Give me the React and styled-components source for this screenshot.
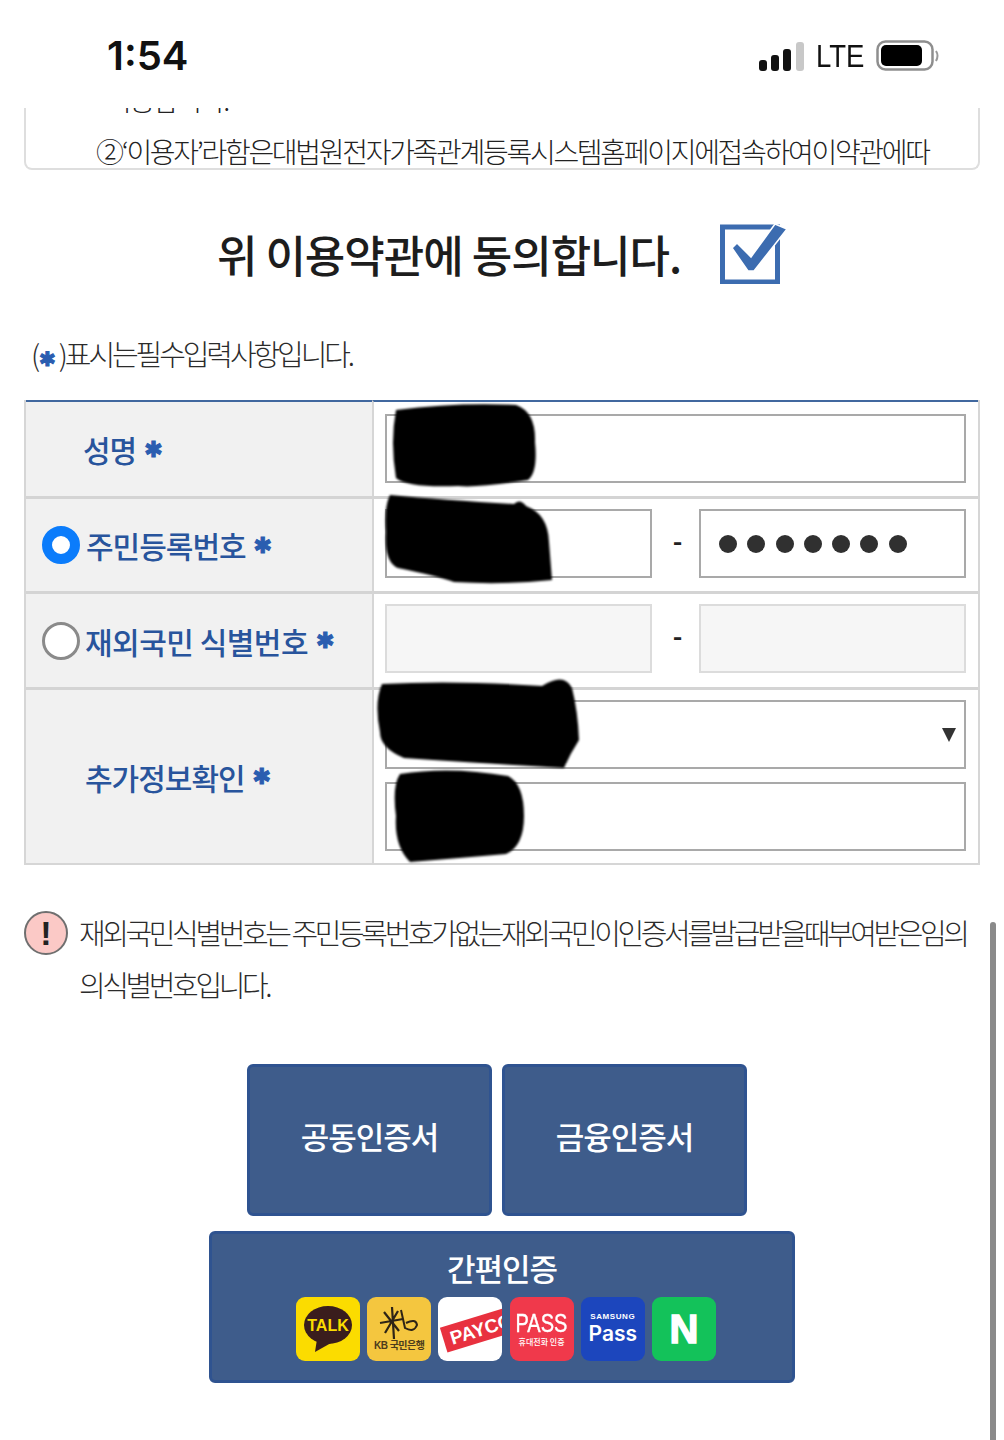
import styled, { createGlobalStyle } from 'styled-components';

const GlobalStyle = createGlobalStyle`
  html, body {
    margin: 0;
    padding: 0;
    background: #fff;
  }
  * {
    box-sizing: border-box;
  }
`;

const KR = `'Noto Sans CJK KR', 'Noto Sans', sans-serif`;

const Page = styled.div`
  position: relative;
  width: 1004px;
  height: 1440px;
  overflow: hidden;
  background: #fff;
  font-family: ${KR};
  color: #2b2b2b;
`;

const StatusBar = styled.div`
  height: 108px;
  display: flex;
  align-items: flex-start;
  justify-content: space-between;
  padding: 30px 64px 0 107px;
`;

const Time = styled.div`
  font-family: Inter, sans-serif;
  font-size: 40px;
  line-height: 52px;
  font-weight: 600;
  color: #111;
`;

const StatusIcons = styled.div`
  display: flex;
  align-items: center;
  gap: 11px;
  height: 52px;
`;

const Lte = styled.span`
  font-family: 'Liberation Sans', sans-serif;
  font-size: 32px;
  line-height: 52px;
  color: #111;
  transform: scaleX(0.86);
  transform-origin: left center;
  width: 49px;
`;

const TermsBox = styled.div`
  margin: 0 24px;
  height: 62px;
  border: 2px solid #dedede;
  border-top: 0;
  border-radius: 0 0 8px 8px;
  overflow: hidden;
  display: flex;
  flex-direction: column;
  justify-content: flex-end;
  padding-left: 70px;
`;

const TermsLine = styled.div`
  flex: none;
  height: 34px;
  margin-top: 18px;
  padding-left: ${(p) => p.$indent || 0}px;
  line-height: 34px;
  font-size: 28px;
  letter-spacing: -2.3px;
  white-space: nowrap;
  font-weight: 300;
  color: #222;
`;

const AgreeRow = styled.div`
  height: 172px;
  padding: 0 0 4px 217px;
  display: flex;
  align-items: center;
`;

const AgreeText = styled.div`
  width: 503px;
  font-size: 44px;
  font-weight: 500;
  letter-spacing: -1px;
  line-height: 60px;
  color: #1d1d1d;
  white-space: nowrap;
`;

const RequiredNote = styled.div`
  height: 58px;
  padding-left: 31px;
  font-size: 29px;
  line-height: 22px;
  font-weight: 300;
  letter-spacing: -3.1px;
  color: #2b2b2b;
  white-space: nowrap;
`;

const Star = styled.span`
  font-family: 'DejaVu Sans', sans-serif;
  color: #2a5db0;
  font-size: ${(p) => p.$size || 22}px;
  letter-spacing: 0;
  font-weight: 700;
  -webkit-text-stroke: 1px #2a5db0;
  margin: ${(p) => p.$margin || '0 0 0 8px'};
`;

const FormTable = styled.div`
  margin: 0 24px;
  width: 956px;
  display: grid;
  grid-template-columns: 346px 1fr;
  border-left: 2px solid #d6d6d6;
  border-right: 2px solid #d6d6d6;
  border-bottom: 2px solid #d6d6d6;
`;

const LabelCell = styled.div`
  height: ${(p) => p.$height}px;
  background: #f1f1f1;
  border-top: ${(p) => (p.$first ? '2px solid #41689f' : '3px solid #d4d4d4')};
  display: flex;
  align-items: center;
  padding-left: ${(p) => p.$indent}px;
`;

const LabelText = styled.span`
  color: #28549c;
  font-size: 30px;
  font-weight: 500;
  letter-spacing: ${(p) => p.$spacing || 0}px;
  white-space: nowrap;
  line-height: 44px;
`;

const Radio = styled.span`
  flex: none;
  width: 38px;
  height: 38px;
  border-radius: 50%;
  margin-right: ${(p) => p.$gap}px;
  background: #fff;
  border: ${(p) => (p.$checked ? '10px solid #0b7cfb' : '3px solid #8a8a8a')};
`;

const FieldCell = styled.div`
  height: ${(p) => p.$height}px;
  border-left: 2px solid #d6d6d6;
  border-top: ${(p) => (p.$first ? '2px solid #41689f' : '3px solid #d4d4d4')};
  background: #fff;
  padding: ${(p) => (p.$first ? 12 : 10)}px 12px 0 11px;
  display: flex;
  flex-direction: column;
  gap: 13px;
`;

const FieldRow = styled.div`
  display: flex;
  align-items: center;
`;

const Input = styled.div`
  flex: none;
  width: ${(p) => (p.$half ? '267px' : 'auto')};
  height: 69px;
  border: 2px solid ${(p) => (p.$disabled ? '#dcdcdc' : '#a9a9a9')};
  background: ${(p) => (p.$disabled ? '#f6f6f6' : '#fff')};
  position: relative;
  display: flex;
  align-items: center;
`;

const Dash = styled.span`
  width: 47px;
  padding: 0 0 8px 4px;
  text-align: center;
  font-size: 26px;
  font-weight: 700;
  color: #222;
`;

const Dots = styled.div`
  display: flex;
  gap: 10.3px;
  padding-left: 18px;
`;

const Dot = styled.span`
  width: 18px;
  height: 18px;
  border-radius: 50%;
  background: #303030;
`;

const Caret = styled.span`
  position: absolute;
  right: 8px;
  top: 26px;
  width: 0;
  height: 0;
  border-left: 7px solid transparent;
  border-right: 7px solid transparent;
  border-top: 14px solid #333;
`;

const InfoBlock = styled.div`
  display: flex;
  margin: 41px 0 0 24px;
  width: 950px;
`;

const InfoIcon = styled.div`
  flex: none;
  width: 44px;
  height: 44px;
  margin: 5px 11px 0 0;
  border-radius: 50%;
  background: #fbc9c6;
  border: 2px solid #6f6f6f;
  color: #222;
  font-family: 'Liberation Sans', sans-serif;
  font-weight: 700;
  font-size: 34px;
  line-height: 40px;
  text-align: center;
`;

const InfoText = styled.div`
  font-size: 29px;
  line-height: 52px;
  font-weight: 300;
  letter-spacing: -3.4px;
  color: #2b2b2b;
  white-space: nowrap;
`;

const ButtonGroup = styled.div`
  margin-top: 54px;
  display: flex;
  flex-direction: column;
  align-items: center;
  gap: 15px;
`;

const ButtonRow = styled.div`
  display: flex;
  gap: 10px;
  margin-right: 10px;
`;

const AuthButton = styled.div`
  width: ${(p) => p.$width}px;
  height: 152px;
  background: #3e5c8b;
  border: 3px solid #2f5390;
  border-radius: 6px;
  color: #fff;
  display: flex;
  flex-direction: column;
  align-items: center;
  justify-content: ${(p) => (p.$top ? 'flex-start' : 'center')};
  font-size: 31px;
  font-weight: 500;
  letter-spacing: -1px;
  line-height: 44px;
  padding: ${(p) => (p.$top ? '12px 0 0' : '0 0 8px')};
`;

const LogoRow = styled.div`
  display: flex;
  gap: 7.2px;
  margin: 7px 0 0 8px;
`;

const Logo = styled.div`
  position: relative;
  width: 64px;
  height: 64px;
  border-radius: 9px;
  overflow: hidden;
  background: ${(p) => p.$bg};
  color: ${(p) => p.$fg || '#fff'};
  display: flex;
  flex-direction: column;
  align-items: center;
  justify-content: center;
  letter-spacing: 0;
`;

const KbCaption = styled.span`
  font-family: 'Liberation Sans', ${KR};
  font-size: 10px;
  font-weight: 700;
  line-height: 12px;
  letter-spacing: -0.5px;
  color: #4b3b1c;
  white-space: nowrap;
`;

const PaycoBand = styled.span`
  position: absolute;
  left: 4px;
  top: 19px;
  width: 76px;
  height: 26px;
  background: #e8313f;
  color: #fff;
  font-family: 'Liberation Sans', sans-serif;
  font-weight: 700;
  font-size: 19px;
  line-height: 27px;
  padding-left: 7px;
  transform: rotate(-17deg);
  white-space: nowrap;
`;

const PassTitle = styled.span`
  font-family: 'Liberation Sans', sans-serif;
  font-size: 25px;
  line-height: 26px;
  transform: scaleX(0.8);
  font-weight: 500;
  -webkit-text-stroke: 0.4px #fff;
`;

const PassSub = styled.span`
  font-size: 8px;
  line-height: 12px;
  white-space: nowrap;
`;

const SamsungLabel = styled.span`
  font-family: 'Liberation Sans', sans-serif;
  font-weight: 700;
  font-size: 8px;
  line-height: 10px;
  letter-spacing: 0.6px;
`;

const SamsungPass = styled.span`
  font-family: Inter, sans-serif;
  font-weight: 600;
  font-size: 21px;
  line-height: 24px;
`;

const NaverN = styled.span`
  font-family: 'Liberation Sans', sans-serif;
  font-weight: 700;
  font-size: 40px;
  line-height: 40px;
  -webkit-text-stroke: 1.5px #fff;
`;

const ScrollThumb = styled.div`
  position: absolute;
  left: 990px;
  top: 922px;
  width: 6px;
  height: 530px;
  border-radius: 3px;
  background: #8a8a8a;
`;

const Redaction = styled.svg`
  position: absolute;
  left: ${(p) => p.$x}px;
  top: ${(p) => p.$y}px;
  filter: blur(1px);
`;

const redactions = [
  { x: 388, y: 402, w: 150, h: 88, d: 'M8 8 Q70 0 128 3 Q148 10 147 40 Q150 70 140 78 Q90 86 70 84 Q20 86 8 76 Q2 40 8 8Z' },
  { x: 384, y: 492, w: 172, h: 94, d: 'M6 3 Q60 8 130 12 Q136 6 142 14 Q164 22 165 50 L168 88 Q120 93 70 90 Q54 84 14 76 Q0 70 2 40 Q0 15 6 3Z' },
  { x: 374, y: 672, w: 210, h: 100, d: 'M8 12 Q80 8 168 14 Q190 0 198 16 Q204 40 205 68 Q196 82 190 96 Q120 92 30 86 Q6 76 6 60 Q0 30 8 12Z' },
  { x: 390, y: 766, w: 138, h: 100, d: 'M10 8 Q60 0 118 10 Q134 18 134 50 Q134 80 116 88 Q70 92 20 96 Q4 80 6 50 Q2 20 10 8Z' },
];

const App = () => {
  return (
    <Page>
      <GlobalStyle />
      <StatusBar>
        <Time>1:54</Time>
        <StatusIcons>
          <svg width="46" height="30" viewBox="0 0 46 30">
            <rect x="0" y="19" width="8" height="11" rx="3" fill="#111" />
            <rect x="12" y="14" width="8" height="16" rx="3" fill="#111" />
            <rect x="24" y="8" width="8" height="22" rx="3" fill="#111" />
            <rect x="37" y="1" width="8" height="29" rx="3" fill="#c8c8c8" />
          </svg>
          <Lte>LTE</Lte>
          <svg width="64" height="32" viewBox="0 0 64 32">
            <rect x="1.5" y="1.5" width="55" height="28" rx="8" fill="none" stroke="#8e8e8e" strokeWidth="2.5" />
            <rect x="5" y="5" width="41" height="21" rx="5" fill="#000" />
            <path d="M60 11 Q63 15.5 60 21" fill="none" stroke="#999" strokeWidth="2" />
          </svg>
        </StatusIcons>
      </StatusBar>

      <TermsBox>
        <TermsLine $indent={10}>이용합니다.</TermsLine>
        <TermsLine>②‘이용자’라함은대법원전자가족관계등록시스템홈페이지에접속하여이약관에따</TermsLine>
      </TermsBox>

      <AgreeRow>
        <AgreeText>위 이용약관에 동의합니다.</AgreeText>
        <svg width="68" height="60" viewBox="0 0 68 60">
          <rect x="2.5" y="3" width="55" height="55" fill="none" stroke="#3c6cb0" strokeWidth="5" />
          <path d="M12 24 L17 19 L31 33 L55 0 L67 5 L34 47 L28 47Z" fill="#3c6cb0" stroke="#fff" strokeWidth="1.5" />
        </svg>
      </AgreeRow>

      <RequiredNote>
        (<Star $size={20} $margin="0 3px 0 2px">✱</Star>)표시는필수입력사항입니다.
      </RequiredNote>

      <FormTable>
        <LabelCell $first $height={96} $indent={57}>
          <LabelText $spacing={-1}>성명</LabelText>
          <Star>✱</Star>
        </LabelCell>
        <FieldCell $first $height={96}>
          <Input />
        </FieldCell>

        <LabelCell $height={95} $indent={16}>
          <Radio $checked $gap={6} />
          <LabelText $spacing={-1}>주민등록번호</LabelText>
          <Star>✱</Star>
        </LabelCell>
        <FieldCell $height={95}>
          <FieldRow>
            <Input $half />
            <Dash>-</Dash>
            <Input $half>
              <Dots>
                {[0, 1, 2, 3, 4, 5, 6].map((i) => (
                  <Dot key={i} />
                ))}
              </Dots>
            </Input>
          </FieldRow>
        </FieldCell>

        <LabelCell $height={96} $indent={16}>
          <Radio $gap={5} />
          <LabelText $spacing={-0.5}>재외국민 식별번호</LabelText>
          <Star>✱</Star>
        </LabelCell>
        <FieldCell $height={96}>
          <FieldRow>
            <Input $half $disabled />
            <Dash>-</Dash>
            <Input $half $disabled />
          </FieldRow>
        </FieldCell>

        <LabelCell $height={176} $indent={59}>
          <LabelText $spacing={-1}>추가정보확인</LabelText>
          <Star>✱</Star>
        </LabelCell>
        <FieldCell $height={176}>
          <Input>
            <Caret />
          </Input>
          <Input />
        </FieldCell>
      </FormTable>

      <InfoBlock>
        <InfoIcon>!</InfoIcon>
        <InfoText>
          재외국민식별번호는 주민등록번호가없는재외국민이인증서를발급받을때부여받은임의
          <br />
          의식별번호입니다.
        </InfoText>
      </InfoBlock>

      <ButtonGroup>
        <ButtonRow>
          <AuthButton $width={245}>공동인증서</AuthButton>
          <AuthButton $width={245}>금융인증서</AuthButton>
        </ButtonRow>
        <AuthButton $width={586} $top>
          간편인증
          <LogoRow>
            <Logo $bg="#fbdc00">
              <svg width="50" height="48" viewBox="0 0 50 48">
                <ellipse cx="25" cy="20" rx="24" ry="19" fill="#3a1d1d" />
                <path d="M14 34 L12 47 L28 38Z" fill="#3a1d1d" />
                <text x="25" y="26" textAnchor="middle" fontFamily="Liberation Sans" fontWeight="700" fontSize="16" fill="#fbdc00">TALK</text>
              </svg>
            </Logo>
            <Logo $bg="#f4c63f">
              <svg width="40" height="34" viewBox="0 0 40 34">
                <path d="M1 17 L24 13 M5 6 L20 25 M19 5 L6 27 M13 1 L15 33" stroke="#2e2416" strokeWidth="2.2" fill="none" />
                <path d="M22 4 L26 22 Q35 27 38 19 Q37 12 27 17" stroke="#2e2416" strokeWidth="2" fill="none" />
              </svg>
              <KbCaption>KB 국민은행</KbCaption>
            </Logo>
            <Logo $bg="#fff">
              <PaycoBand>PAYCO</PaycoBand>
            </Logo>
            <Logo $bg="#f0394b">
              <PassTitle>PASS</PassTitle>
              <PassSub>휴대전화 인증</PassSub>
            </Logo>
            <Logo $bg="#1c46bd">
              <SamsungLabel>SAMSUNG</SamsungLabel>
              <SamsungPass>Pass</SamsungPass>
            </Logo>
            <Logo $bg="#13c25a">
              <NaverN>N</NaverN>
            </Logo>
          </LogoRow>
        </AuthButton>
      </ButtonGroup>

      <ScrollThumb />

      {redactions.map((r) => (
        <Redaction key={r.x} $x={r.x} $y={r.y} width={r.w} height={r.h} viewBox={`0 0 ${r.w} ${r.h}`}>
          <path d={r.d} fill="#000" />
        </Redaction>
      ))}
    </Page>
  );
};

export default App;
